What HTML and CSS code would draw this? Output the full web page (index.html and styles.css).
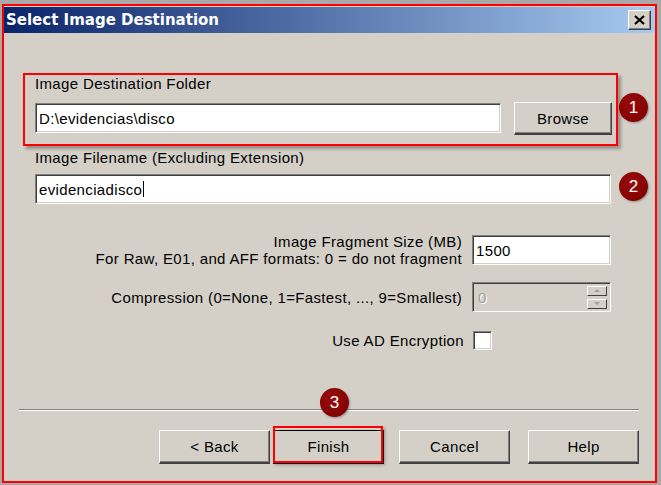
FILE: index.html
```html
<!DOCTYPE html>
<html>
<head>
<meta charset="utf-8">
<link rel="stylesheet" href="styles.css">
</head>
<body>
<div class="screen">
  <div class="dialog">
    <div class="titlebar">
      <span class="title">Select Image Destination</span>
      <span class="close">
        <svg width="11" height="10" viewBox="0 0 11 10"><path d="M1 1 L10 9 M10 1 L1 9" stroke="#000" stroke-width="2.2" fill="none"/></svg>
      </span>
    </div>
    <div class="content">
      <div class="group">
        <div class="label">Image Destination Folder</div>
        <div class="row1">
          <div class="field w-folder">D:\evidencias\disco</div>
          <div class="btn browse">Browse</div>
        </div>
      </div>
      <div class="label label2">Image Filename (Excluding Extension)</div>
      <div class="field w-name">evidenciadisco<span class="caret"></span></div>

      <div class="opt opt-frag">
        <div class="optlabel">Image Fragment Size (MB)<br>For Raw, E01, and AFF formats: 0 = do not fragment</div>
        <div class="field w-opt">1500</div>
      </div>
      <div class="opt opt-comp">
        <div class="optlabel">Compression (0=None, 1=Fastest, ..., 9=Smallest)</div>
        <div class="field w-opt spin">
          <span class="disabled">0</span>
          <span class="spinbtns">
            <span class="sb"><span class="arr up"></span></span>
            <span class="sb"><span class="arr down"></span></span>
          </span>
        </div>
      </div>
      <div class="opt opt-enc">
        <div class="optlabel">Use AD Encryption</div>
        <div class="check"></div>
      </div>

      <div class="sep"></div>

      <div class="buttons">
        <div class="btn wide">&lt; Back</div>
        <div class="btn wide finish">Finish</div>
        <div class="btn wide cancel">Cancel</div>
        <div class="btn wide help">Help</div>
      </div>
    </div>

    <div class="badge b1">1</div>
    <div class="badge b2">2</div>
    <div class="badge b3">3</div>
    <div class="hl-finish"></div>
  </div>
</div>
</body>
</html>
```
FILE: styles.css
```css
html, body {
  margin: 0;
  padding: 0;
}
.screen {
  width: 661px;
  height: 485px;
  background: #a9a9a9;
  padding: 4px 0 0 2px;
  box-sizing: border-box;
  overflow: hidden;
}
.dialog {
  position: relative;
  width: 655px;
  height: 479px;
  box-sizing: border-box;
  border: 2px solid #ff0000;
  background: #d4d0c8;
  font-family: "Liberation Sans", Arial, sans-serif;
  font-size: 15px;
  letter-spacing: 0.35px;
  line-height: 17px;
  color: #000;
}
.titlebar {
  margin-top: 1px;
  height: 26px;
  background: linear-gradient(to right, #0a246a, #a6caf0);
  display: flex;
  align-items: center;
  justify-content: space-between;
  padding: 0 4px 0 2px;
}
.title {
  font-family: "DejaVu Sans", Verdana, sans-serif;
  font-weight: bold;
  font-size: 15px;
  color: #fff;
  letter-spacing: 0;
}
.close {
  width: 23px;
  height: 20px;
  box-sizing: border-box;
  background: #d4d0c8;
  border-top: 1px solid #fff;
  border-left: 1px solid #fff;
  border-right: 1px solid #404040;
  border-bottom: 1px solid #404040;
  box-shadow: inset -1px -1px #808080;
  display: flex;
  align-items: center;
  justify-content: center;
}
.content {
  display: flex;
  flex-direction: column;
  align-items: flex-start;
}
.group {
  margin: 40px 0 0 19px;
  width: 595px;
  height: 73px;
  box-sizing: border-box;
  border: 2px solid #ff0000;
  box-shadow: 3px 3px 3px rgba(0, 0, 0, 0.3);
  padding: 0 0 0 10px;
}
.label {
  height: 17px;
}
.row1 {
  display: flex;
  align-items: flex-start;
  margin-top: 10px;
}
.field {
  height: 30px;
  box-sizing: border-box;
  background: #fff;
  border-top: 1px solid #808080;
  border-left: 1px solid #808080;
  border-right: 1px solid #fff;
  border-bottom: 1px solid #fff;
  box-shadow: inset 1px 1px #404040, inset -1px -1px #d4d0c8;
  padding: 0 0 0 3px;
  display: flex;
  align-items: center;
}
.w-folder {
  width: 466px;
  margin-top: 1px;
}
.btn {
  box-sizing: border-box;
  background: #d4d0c8;
  border-top: 1px solid #fff;
  border-left: 1px solid #fff;
  border-right: 1px solid #404040;
  border-bottom: 2px solid #404040;
  box-shadow: inset -1px -1px #808080;
  display: flex;
  align-items: center;
  justify-content: center;
}
.browse {
  width: 98px;
  height: 33px;
  margin-left: 13px;
}
.label2 {
  margin: 3px 0 0 31px;
}
.w-name {
  width: 576px;
  margin: 8px 0 0 31px;
}
.caret {
  width: 1px;
  height: 16px;
  background: #000;
  margin-left: 1px;
}
.opt {
  display: flex;
  justify-content: flex-end;
  align-self: stretch;
  padding-right: 44px;
}
.optlabel {
  text-align: right;
  margin-right: 10px;
}
.opt-frag {
  margin-top: 29px;
  align-items: flex-start;
}
.opt-frag .field {
  margin-top: 2px;
}
.w-opt {
  width: 139px;
}
.opt-comp {
  margin-top: 15px;
  align-items: center;
}
.spin {
  background: #d4d0c8;
  justify-content: space-between;
  padding-left: 5px;
}
.disabled {
  color: #a0a0a0;
  text-shadow: 1px 1px 0 #fff;
}
.spinbtns {
  display: flex;
  flex-direction: column;
  gap: 3px;
  margin-right: 3px;
}
.sb {
  width: 20px;
  height: 10px;
  box-sizing: border-box;
  background: #d4d0c8;
  border-top: 1px solid #fff;
  border-left: 1px solid #fff;
  border-right: 1px solid #404040;
  border-bottom: 1px solid #404040;
  display: flex;
  align-items: center;
  justify-content: center;
}
.arr {
  width: 0;
  height: 0;
  border-left: 3px solid transparent;
  border-right: 3px solid transparent;
}
.arr.up {
  border-bottom: 3px solid #a0a0a0;
}
.arr.down {
  border-top: 3px solid #a0a0a0;
}
.opt-enc {
  margin-top: 19px;
  align-items: center;
  padding-right: 163px;
}
.opt-enc .optlabel {
  margin-right: 9px;
}
.check {
  width: 19px;
  height: 19px;
  box-sizing: border-box;
  background: #fff;
  border-top: 1px solid #808080;
  border-left: 1px solid #808080;
  border-right: 1px solid #fff;
  border-bottom: 1px solid #fff;
  box-shadow: inset 1px 1px #404040, inset -1px -1px #d4d0c8;
}
.sep {
  align-self: stretch;
  margin: 59px 16px 0 15px;
  border-top: 1px solid #808080;
  border-bottom: 1px solid #fff;
}
.buttons {
  display: flex;
  margin: 19px 0 0 155px;
}
.wide {
  width: 111px;
  height: 34px;
}
.finish {
  margin-left: 3px;
  border: 1px solid #000;
  border-bottom-width: 2px;
}
.cancel {
  margin-left: 15px;
}
.help {
  margin-left: 18px;
}
.badge {
  position: absolute;
  width: 29px;
  height: 29px;
  border-radius: 50%;
  background: radial-gradient(circle at 40% 35%, #9a0a0a, #7a0000);
  color: #fff;
  font-size: 17px;
  letter-spacing: 0;
  line-height: 29px;
  text-align: center;
  box-shadow: 1px 1px 2px rgba(0, 0, 0, 0.3);
}
.b1 {
  left: 615px;
  top: 87px;
}
.b2 {
  left: 615px;
  top: 166px;
}
.b3 {
  left: 316px;
  top: 382px;
}
.hl-finish {
  position: absolute;
  left: 269px;
  top: 420px;
  width: 110px;
  height: 37px;
  box-sizing: border-box;
  border: 2px solid #ff0000;
  box-shadow: 2px 2px 3px rgba(0, 0, 0, 0.3);
}
```
